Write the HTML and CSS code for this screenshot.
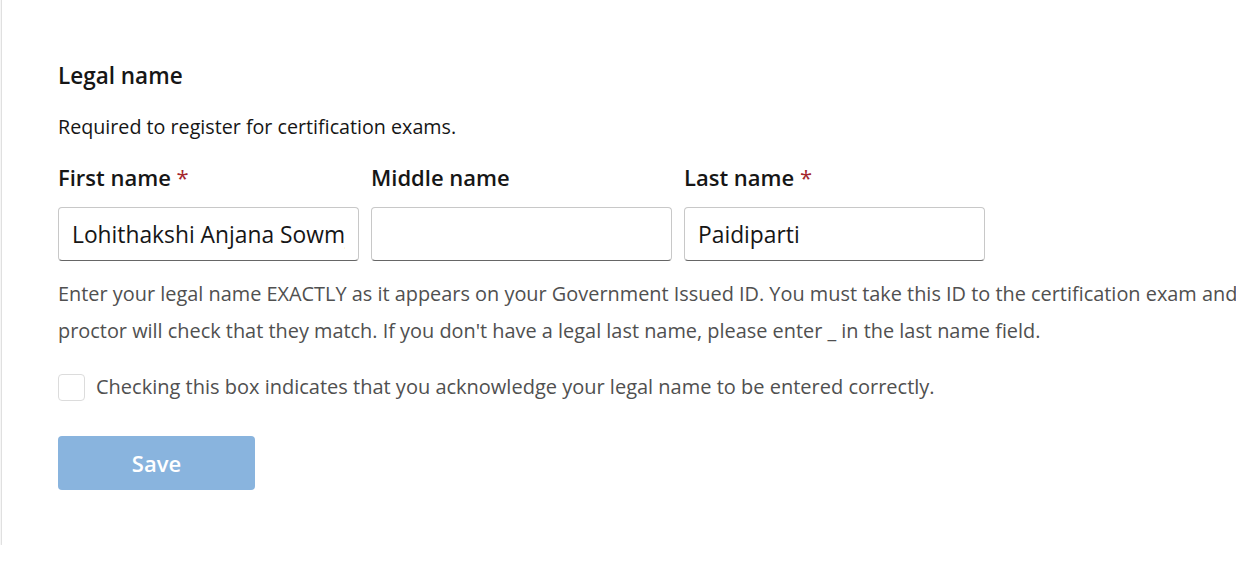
FILE: index.html
```html
<!DOCTYPE html>
<html>
<head>
<meta charset="utf-8">
<link rel="stylesheet" href="styles.css">
</head>
<body>
<div class="card">
  <h2 class="title">Legal name</h2>
  <p class="subtitle">Required to register for certification exams.</p>
  <div class="fields">
    <div class="field">
      <label class="label">First name <span class="req">*</span></label>
      <input class="input" type="text" value="Lohithakshi Anjana Sowmya">
    </div>
    <div class="field">
      <label class="label">Middle name</label>
      <input class="input" type="text" value="">
    </div>
    <div class="field">
      <label class="label">Last name <span class="req">*</span></label>
      <input class="input" type="text" value="Paidiparti">
    </div>
  </div>
  <p class="help">Enter your legal name EXACTLY as it appears on your Government Issued ID. You must take this ID to the certification exam and the proctor will check that they match. If you don't have a legal last name, please enter _ in the last name field.</p>
  <label class="check">
    <span class="box"></span>
    <span class="check-text">Checking this box indicates that you acknowledge your legal name to be entered correctly.</span>
  </label>
  <button class="save" type="button">Save</button>
</div>
</body>
</html>
```
FILE: styles.css
```css
html, body {
  margin: 0;
  padding: 0;
  background: #ffffff;
  overflow: hidden;
}
body {
  font-family: "Segoe UI", "Open Sans", "Noto Sans", sans-serif;
  color: #161616;
}
.card {
  width: 1300px;
  margin: -20px 0 0 2px;
  padding: 81px 56px 55px 56px;
  background: #fff;
  box-shadow: 0 1px 3px rgba(0,0,0,0.18), -1px 0 1px rgba(0,0,0,0.06);
}
.title {
  margin: 0;
  font-size: 22.5px;
  font-weight: 600;
  line-height: 30px;
}
.subtitle {
  margin: 23px 0 0 0;
  font-size: 19.7px;
  line-height: 26px;
  color: #161616;
}
.fields {
  display: flex;
  gap: 12px;
  margin-top: 22px;
}
.field {
  display: flex;
  flex-direction: column;
  width: 301px;
}
.label {
  font-size: 22px;
  font-weight: 600;
  line-height: 30px;
}
.req {
  color: #a4262c;
  font-weight: 400;
}
.input {
  margin-top: 15px;
  box-sizing: border-box;
  height: 54px;
  width: 301px;
  padding: 0 13px;
  border: 1px solid #c8c8c8;
  border-bottom-color: #666;
  border-radius: 4px;
  font-family: inherit;
  font-size: 22.8px;
  color: #161616;
  background: #fff;
}
.help {
  width: 1240px;
  margin: 14px 0 0 0;
  font-size: 19.9px;
  line-height: 37px;
  color: #505050;
}
.check {
  display: flex;
  align-items: center;
  gap: 11px;
  margin-top: 24px;
  height: 28px;
}
.box {
  box-sizing: border-box;
  width: 27px;
  height: 27px;
  border: 1px solid #dcdcdc;
  border-radius: 4px;
}
.check-text {
  font-size: 20px;
  line-height: 28px;
  color: #505050;
}
.save {
  display: block;
  margin-top: 35px;
  width: 197px;
  height: 54px;
  border: none;
  border-radius: 4px;
  background: #89b4de;
  color: #fff;
  font-family: inherit;
  font-size: 22px;
  font-weight: 600;
}
```
